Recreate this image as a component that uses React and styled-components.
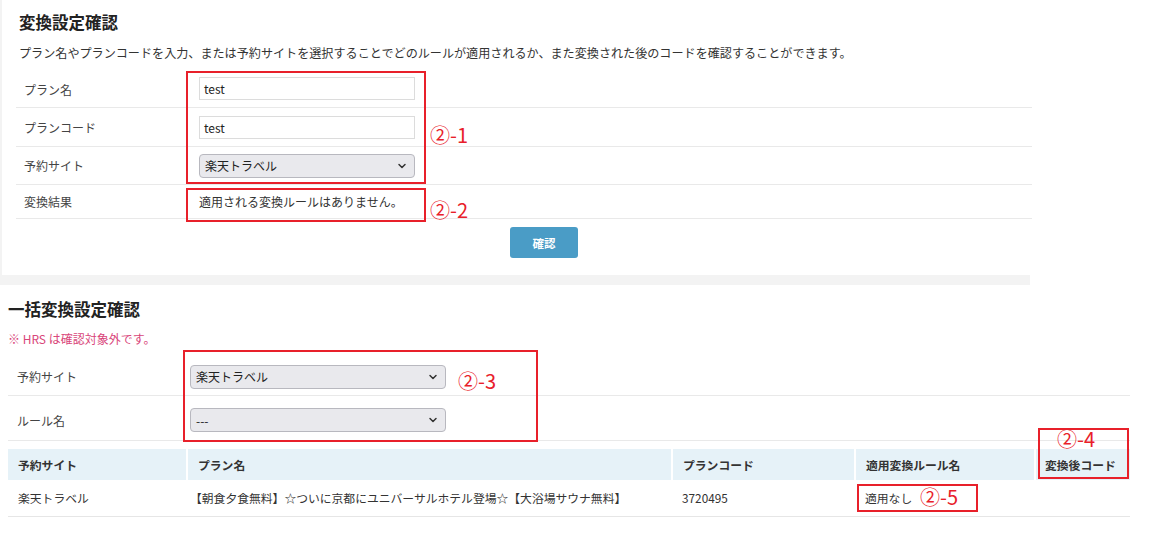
import React from 'react'
import styled, { createGlobalStyle } from 'styled-components'
import { ChevronDown } from 'lucide-react'

const GlobalStyle = createGlobalStyle`
  html, body {
    margin: 0;
    padding: 0;
    background: #ffffff;
  }
  body {
    font-family: "Noto Sans CJK JP", "Noto Sans", sans-serif;
    color: #333;
  }
`

const Page = styled.div`
  position: relative;
  width: 1154px;
  height: 538px;
  overflow: hidden;
  background: #fff;
`

const TopCard = styled.section`
  width: 1016px;
  padding: 11px 0 17px 14px;
  border-left: 2px solid #f3f3f3;
`

const GrayStrip = styled.div`
  width: 1030px;
  height: 10px;
  background: #f3f3f3;
`

const Title = styled.h2`
  margin: 0 0 0 ${p => p.$indent || 0}px;
  font-size: 16.5px;
  font-weight: 700;
  line-height: 22px;
  color: #222;
`

const Description = styled.p`
  margin: 11px 0 0 3px;
  font-size: 12.1px;
  line-height: 18px;
  color: #333;
`

const FormTable = styled.div`
  margin-top: 8px;
  display: grid;
  grid-template-columns: 183px 1fr;
`

const Row = styled.div`
  display: contents;
`

const LabelCell = styled.div`
  box-sizing: border-box;
  display: flex;
  align-items: center;
  height: ${p => p.$h}px;
  padding-left: ${p => p.$pad || 8}px;
  padding-top: ${p => p.$top || 0}px;
  font-size: 12px;
  color: #444;
  border-bottom: 1px solid #e9e9e9;
`

const ValueCell = styled(LabelCell)`
  padding-left: 0;
  color: #333;
`

const TextInput = styled.div`
  box-sizing: border-box;
  width: 216px;
  height: 23px;
  border: 1px solid #dcdcdc;
  background: #fff;
  padding: 0 4px;
  display: flex;
  align-items: center;
  font-size: 12px;
  color: #222;
`

const SelectBox = styled.div`
  box-sizing: border-box;
  width: ${p => p.$w}px;
  height: 24px;
  border: 1px solid #b8b8bf;
  border-radius: 4px;
  background: #e9e9ed;
  display: flex;
  align-items: center;
  justify-content: space-between;
  padding: 0 6px 0 5px;
  font-size: 12px;
  color: #222;
`

const ButtonRow = styled.div`
  display: flex;
  padding: 8px 0 0 494px;
`

const ConfirmButton = styled.button`
  width: 68px;
  height: 31px;
  border: none;
  border-radius: 3px;
  background: #4a9cc6;
  color: #fff;
  font-family: inherit;
  font-size: 11.5px;
  font-weight: 700;
`

const BottomSection = styled.section`
  width: 1122px;
  padding: 13px 0 0 8px;
`

const Note = styled.p`
  margin: 11px 0 0 0;
  font-size: 12px;
  line-height: 16px;
  color: #d9467a;
`

const BulkForm = styled(FormTable)`
  margin-top: 11px;
  grid-template-columns: 182px 1fr;
`

const ResultTable = styled.table`
  margin-top: 8px;
  width: 1122px;
  table-layout: fixed;
  border-collapse: collapse;
  font-size: 11.8px;
`

const HeadCell = styled.th`
  box-sizing: border-box;
  height: 31px;
  padding: 0 0 0 ${p => p.$pad || 10}px;
  background: #e6f2f8;
  border-left: ${p => (p.$first ? 'none' : '2px solid #fff')};
  text-align: left;
  font-weight: 700;
  color: #333;
  white-space: nowrap;
  width: ${p => (p.$w ? `${p.$w}px` : 'auto')};
`

const BodyCell = styled.td`
  box-sizing: border-box;
  height: 36px;
  padding: 0 0 0 ${p => p.$pad || 10}px;
  border-bottom: 1px solid #e6e6e6;
  color: #333;
  white-space: nowrap;
`

const Mark = styled.div`
  position: absolute;
  left: ${p => p.$x}px;
  top: ${p => p.$y}px;
  width: ${p => p.$w}px;
  height: ${p => p.$h}px;
  border: 2px solid #e8202a;
  box-sizing: border-box;
`

const MarkText = styled.span`
  position: absolute;
  left: ${p => p.$x}px;
  top: ${p => p.$y}px;
  font-family: "Noto Sans CJK JP", sans-serif;
  font-size: 20px;
  line-height: 22px;
  color: #e8202a;
  white-space: nowrap;
`

const Chevron = () => <ChevronDown size={12} strokeWidth={3} color="#333" />

export default function App() {
  return (
    <Page>
      <GlobalStyle />
      <TopCard>
        <Title $indent={3}>変換設定確認</Title>
        <Description>
          プラン名やプランコードを入力、または予約サイトを選択することでどのルールが適用されるか、また変換された後のコードを確認することができます。
        </Description>
        <FormTable>
          <Row>
            <LabelCell $h={38} $top={2}>プラン名</LabelCell>
            <ValueCell $h={38}><TextInput>test</TextInput></ValueCell>
          </Row>
          <Row>
            <LabelCell $h={39}>プランコード</LabelCell>
            <ValueCell $h={39}><TextInput>test</TextInput></ValueCell>
          </Row>
          <Row>
            <LabelCell $h={38}>予約サイト</LabelCell>
            <ValueCell $h={38}>
              <SelectBox $w={216}><span>楽天トラベル</span><Chevron /></SelectBox>
            </ValueCell>
          </Row>
          <Row>
            <LabelCell $h={34}>変換結果</LabelCell>
            <ValueCell $h={34}>適用される変換ルールはありません。</ValueCell>
          </Row>
        </FormTable>
        <ButtonRow>
          <ConfirmButton>確認</ConfirmButton>
        </ButtonRow>
      </TopCard>
      <GrayStrip />

      <BottomSection>
        <Title>一括変換設定確認</Title>
        <Note>※ HRS は確認対象外です。</Note>
        <BulkForm>
          <Row>
            <LabelCell $h={38} $pad={9}>予約サイト</LabelCell>
            <ValueCell $h={38}>
              <SelectBox $w={256}><span>楽天トラベル</span><Chevron /></SelectBox>
            </ValueCell>
          </Row>
          <Row>
            <LabelCell $h={45} $pad={9} $top={4}>ルール名</LabelCell>
            <ValueCell $h={45} $top={4}>
              <SelectBox $w={256}><span>---</span><Chevron /></SelectBox>
            </ValueCell>
          </Row>
        </BulkForm>
        <ResultTable>
          <thead>
            <tr>
              <HeadCell $first $w={179}>予約サイト</HeadCell>
              <HeadCell $w={485}>プラン名</HeadCell>
              <HeadCell $w={183}>プランコード</HeadCell>
              <HeadCell $w={180}>適用変換ルール名</HeadCell>
              <HeadCell $pad={9}>変換後コード</HeadCell>
            </tr>
          </thead>
          <tbody>
            <tr>
              <BodyCell>楽天トラベル</BodyCell>
              <BodyCell $pad={3}>【朝食夕食無料】☆ついに京都にユニバーサルホテル登場☆【大浴場サウナ無料】</BodyCell>
              <BodyCell>3720495</BodyCell>
              <BodyCell>適用なし</BodyCell>
              <BodyCell />
            </tr>
          </tbody>
        </ResultTable>
      </BottomSection>

      <Mark $x={186} $y={71} $w={240} $h={113} />
      <MarkText $x={430} $y={124}>②-1</MarkText>
      <Mark $x={186} $y={188} $w={240} $h={34} />
      <MarkText $x={430} $y={199}>②-2</MarkText>
      <Mark $x={183} $y={350} $w={355} $h={92} />
      <MarkText $x={458} $y={370}>②-3</MarkText>
      <Mark $x={1038} $y={428} $w={91} $h={51} />
      <MarkText $x={1057} $y={428}>②-4</MarkText>
      <Mark $x={857} $y={484} $w={121} $h={28} />
      <MarkText $x={920} $y={486}>②-5</MarkText>
    </Page>
  )
}
